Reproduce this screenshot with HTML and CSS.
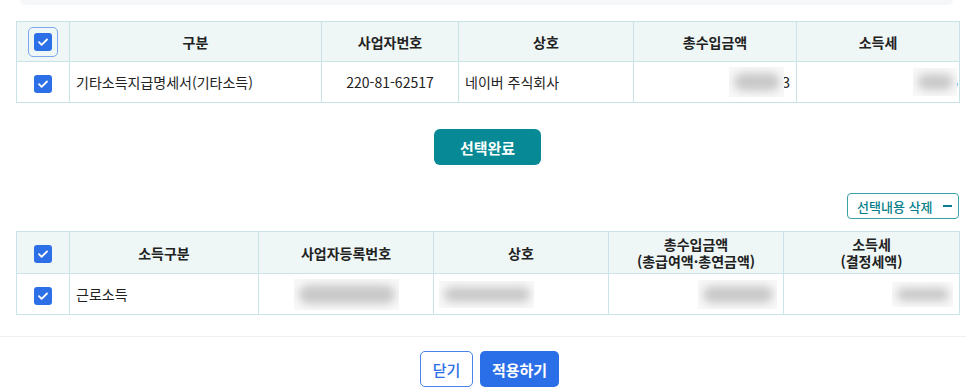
FILE: index.html
```html
<!DOCTYPE html>
<html lang="ko">
<head>
<meta charset="utf-8">
<link rel="stylesheet" href="styles.css">
</head>
<body>
<div class="page">
  <div class="top-strip"></div>
  <div class="content">
    <table class="grid grid-a">
      <colgroup>
        <col style="width:53px"><col style="width:252px"><col style="width:137px"><col style="width:175px"><col style="width:163px"><col style="width:163px">
      </colgroup>
      <thead>
        <tr class="head-a">
          <th><span class="focus-ring"><span class="cb"><svg viewBox="0 0 18 18" width="18" height="18"><path d="M5 9.2l2.6 2.6L13 6.5" fill="none" stroke="#fff" stroke-width="1.8" stroke-linecap="round" stroke-linejoin="round"/></svg></span></span></th>
          <th>구분</th>
          <th>사업자번호</th>
          <th>상호</th>
          <th>총수입금액</th>
          <th>소득세</th>
        </tr>
      </thead>
      <tbody>
        <tr>
          <td class="c"><span class="cb"><svg viewBox="0 0 18 18" width="18" height="18"><path d="M5 9.2l2.6 2.6L13 6.5" fill="none" stroke="#fff" stroke-width="1.8" stroke-linecap="round" stroke-linejoin="round"/></svg></span></td>
          <td class="l">기타소득지급명세서(기타소득)</td>
          <td class="c">220-81-62517</td>
          <td class="l">네이버 주식회사</td>
          <td class="r"><span class="blur b1"><span class="blob"></span></span><span class="tail t1">3</span></td>
          <td class="r"><span class="blur b2"><span class="blob"></span></span><span class="tail t2">5</span></td>
        </tr>
      </tbody>
    </table>

    <div class="center-row">
      <button class="btn-teal">선택완료</button>
    </div>

    <div class="right-row">
      <button class="btn-outline-teal">선택내용 삭제<span class="minus"></span></button>
    </div>

    <table class="grid grid-b">
      <colgroup>
        <col style="width:53px"><col style="width:189px"><col style="width:175px"><col style="width:175px"><col style="width:175px"><col style="width:176px">
      </colgroup>
      <thead>
        <tr class="head-b">
          <th><span class="cb"><svg viewBox="0 0 18 18" width="18" height="18"><path d="M5 9.2l2.6 2.6L13 6.5" fill="none" stroke="#fff" stroke-width="1.8" stroke-linecap="round" stroke-linejoin="round"/></svg></span></th>
          <th>소득구분</th>
          <th>사업자등록번호</th>
          <th>상호</th>
          <th class="two"><span class="ln">총수입금액</span><span class="ln">(총급여액·총연금액)</span></th>
          <th class="two"><span class="ln">소득세</span><span class="ln">(결정세액)</span></th>
        </tr>
      </thead>
      <tbody>
        <tr>
          <td class="c"><span class="cb"><svg viewBox="0 0 18 18" width="18" height="18"><path d="M5 9.2l2.6 2.6L13 6.5" fill="none" stroke="#fff" stroke-width="1.8" stroke-linecap="round" stroke-linejoin="round"/></svg></span></td>
          <td class="l">근로소득</td>
          <td class="c"><span class="blur b3"><span class="blob"></span></span></td>
          <td class="l tight"><span class="blur b4"><span class="blob"></span></span></td>
          <td class="r"><span class="blur b5"><span class="blob"></span></span></td>
          <td class="r"><span class="blur b6"><span class="blob"></span></span></td>
        </tr>
      </tbody>
    </table>
  </div>

  <div class="footer">
    <div class="footer-btns">
      <button class="btn-outline-blue">닫기</button>
      <button class="btn-blue">적용하기</button>
    </div>
  </div>
</div>
</body>
</html>
```

FILE: styles.css
```css
* { box-sizing: border-box; }
html, body { margin: 0; padding: 0; background: #fff; }
body {
  font-family: "Noto Sans CJK KR", "Noto Sans", sans-serif;
  color: #222;
  font-size: 14px;
  width: 966px;
  height: 389px;
  overflow: hidden;
}
.page { width: 966px; }
.top-strip {
  margin: 0 13px 0 20px;
  height: 5px;
  background: #f6f7f9;
  border-radius: 0 0 8px 8px;
}
.content { padding: 16px 7px 0 16px; }
.grid {
  width: 943px;
  table-layout: fixed;
  border-collapse: collapse;
  border: 1px solid #c6e1e4;
}
.grid th, .grid td {
  border: 1px solid #c9e3e6;
  padding: 0 6px;
  white-space: nowrap;
  overflow: hidden;
  vertical-align: middle;
}
.grid th {
  background: #eef7f6;
  font-weight: 700;
  color: #222;
  font-size: 14px;
  text-align: center;
}
.head-a th { height: 40px; }
.head-b th { height: 42px; }
.grid td { height: 41px; line-height: 20px; }
.grid th.two { line-height: 17px; }
.grid th.two .ln { display: block; line-height: 17px; }
.grid td.c { text-align: center; }
.grid td.l { text-align: left; }
.grid td.r { text-align: right; padding-right: 6px; }
.grid td.tight { padding-left: 5px; }

.cb {
  display: inline-flex;
  width: 18px;
  height: 18px;
  border-radius: 3px;
  background: #2c6fe6;
  vertical-align: middle;
  align-items: center;
  justify-content: center;
}
.focus-ring {
  display: inline-flex;
  width: 30px;
  height: 30px;
  border: 1.5px solid #7ea6ef;
  border-radius: 5px;
  align-items: center;
  justify-content: center;
  vertical-align: middle;
}

.blur {
  display: inline-block;
  vertical-align: middle;
  background: #f8f8f8;
  overflow: hidden;
  position: relative;
  z-index: 1;
}
.blob {
  display: block;
  position: absolute;
  left: 5px; right: 4px; top: 6px; bottom: 6px;
  background: #c9c9c9;
  border-radius: 10px;
  filter: blur(4px);
}
.b1 { width: 55px; height: 30px; }
.b2 { width: 44px; height: 28px; }
.b3 { width: 105px; height: 31px; }
.b4 { width: 95px; height: 27px; }
.b5 { width: 79px; height: 29px; }
.b6 { width: 61px; height: 25px; }
.tail { display: inline-block; vertical-align: middle; font-size: 14px; color: #222; position: relative; }
.t1 { margin-left: -2px; }
.t2 { margin-left: -7px; margin-right: -5px; }

button {
  font-family: "Noto Sans CJK KR", "Noto Sans", sans-serif;
  cursor: pointer;
}
.center-row {
  display: flex;
  justify-content: center;
  margin-top: 26px;
}
.btn-teal {
  width: 107px;
  height: 36px;
  border: none;
  border-radius: 6px;
  background: #078a96;
  color: #fff;
  font-size: 15px;
  font-weight: 700;
  padding: 0;
}
.right-row {
  display: flex;
  justify-content: flex-end;
  margin-top: 28px;
  margin-bottom: 12px;
}
.btn-outline-teal {
  height: 26px;
  width: 112px;
  border: 1px solid #3aa0a9;
  border-radius: 4px;
  background: #fff;
  color: #087f8a;
  font-size: 13px;
  font-weight: 500;
  padding: 0 0 0 9px;
  display: flex;
  align-items: center;
  gap: 11px;
}
.minus {
  display: inline-block;
  width: 9px;
  height: 2px;
  background: #087f8a;
}
.footer {
  margin-top: 21px;
  border-top: 1px solid #edf1f6;
  padding-top: 14px;
}
.footer-btns {
  display: flex;
  justify-content: center;
  gap: 7px;
  padding-left: 13px;
}
.btn-outline-blue {
  width: 53px;
  height: 36px;
  border: 1px solid #4a82ea;
  border-radius: 5px;
  background: #fff;
  color: #2c6fe6;
  font-size: 15px;
  font-weight: 500;
  padding: 0;
}
.btn-blue {
  width: 79px;
  height: 36px;
  border: none;
  border-radius: 5px;
  background: #2b6fe8;
  color: #fff;
  font-size: 15px;
  font-weight: 700;
  padding: 0;
}
```
